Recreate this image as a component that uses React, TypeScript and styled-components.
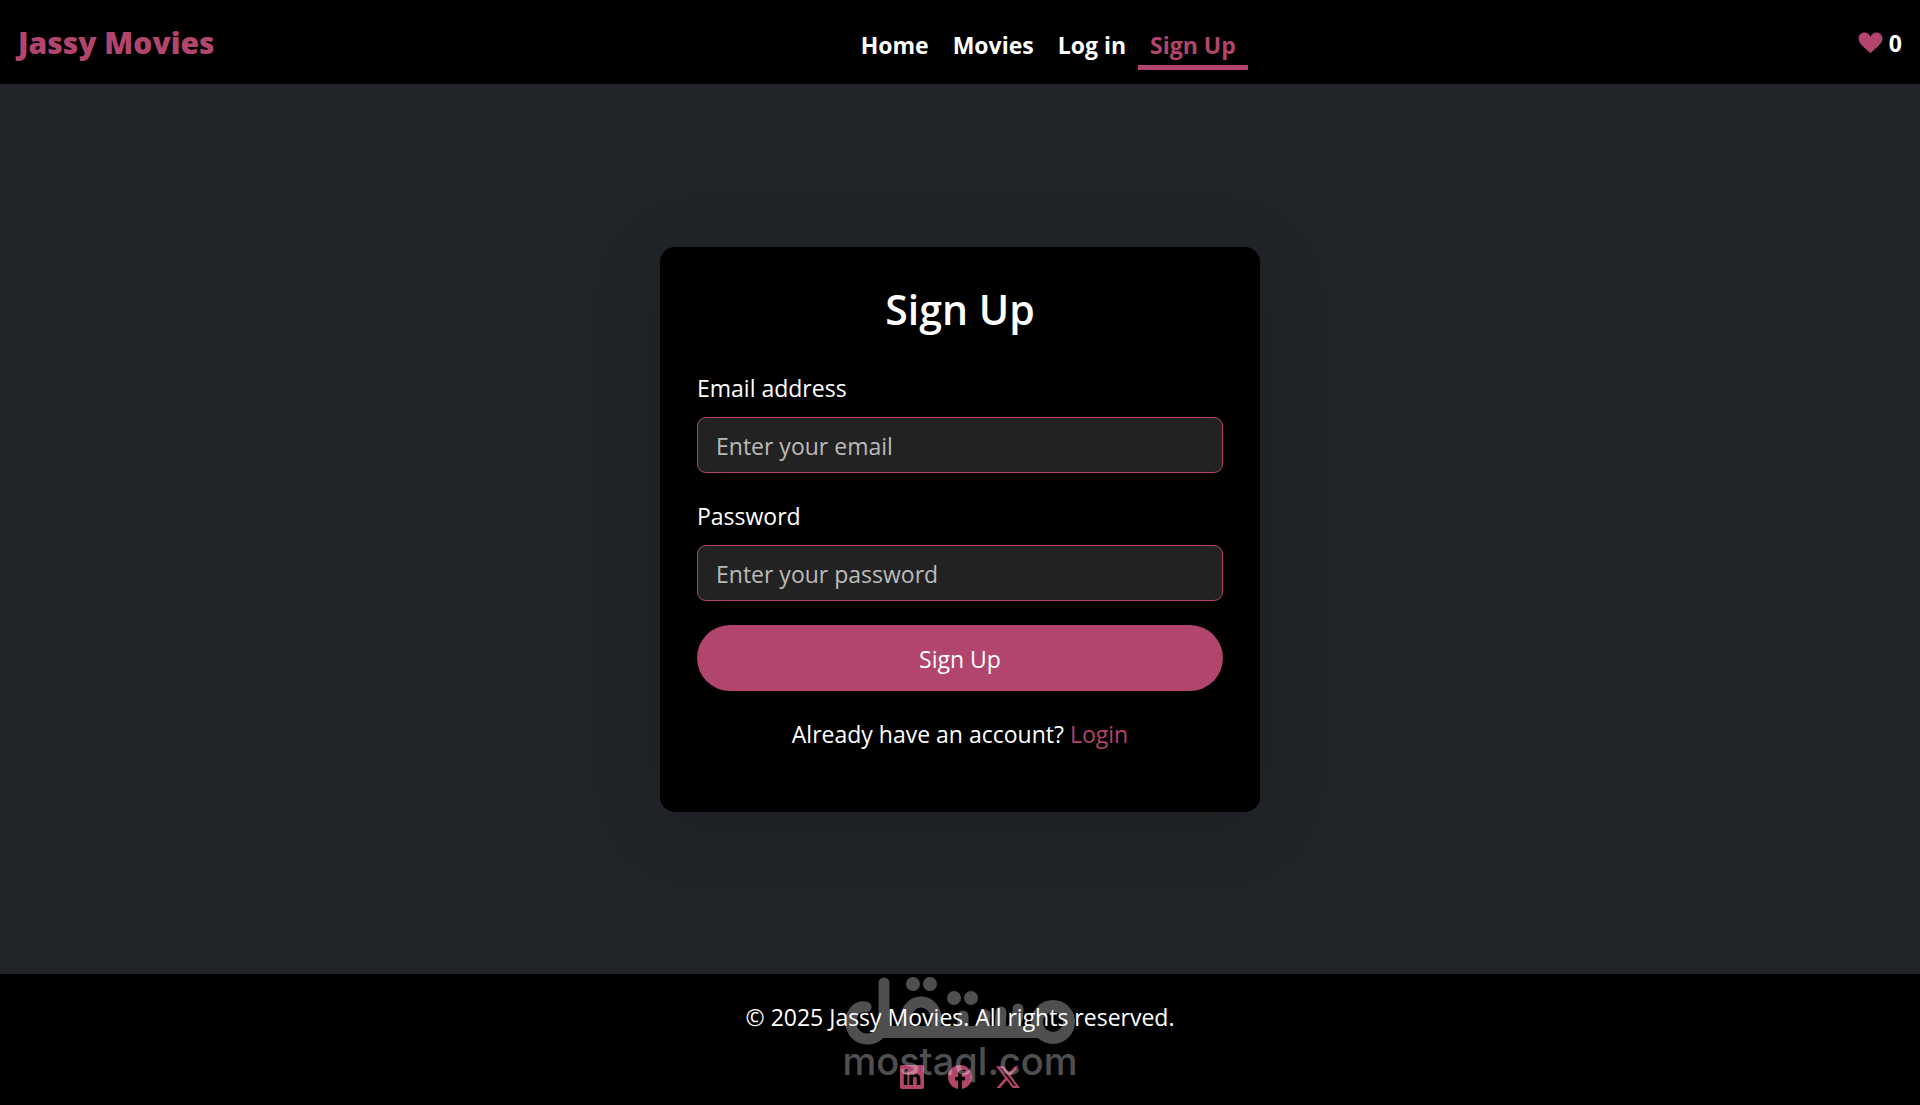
import React from "react";
import styled, { createGlobalStyle } from "styled-components";
import { BsLinkedin, BsFacebook, BsTwitterX } from "react-icons/bs";

const ACCENT = "#b1456d";

const GlobalStyle = createGlobalStyle`
  *, *::before, *::after { box-sizing: border-box; }
  body {
    margin: 0;
    background: #212529;
    color: #fff;
    font-family: "Open Sans", "Noto Sans", sans-serif;
    font-size: 23px;
    line-height: 36px;
  }
  a { color: inherit; text-decoration: none; }
`;

const Page = styled.div`
  display: flex;
  flex-direction: column;
  min-height: 100vh;
`;

const Header = styled.header`
  display: flex;
  align-items: center;
  justify-content: space-between;
  height: 84px;
  padding: 2px 18px 0;
  background: #000;
`;

const Brand = styled.a`
  margin-right: 24px;
  color: ${ACCENT};
  font-size: 30px;
  font-weight: 800;
`;

const Nav = styled.nav`
  display: flex;
`;

const NavLink = styled.a<{ $active?: boolean }>`
  padding: 10px 12px 2px;
  border-bottom: 5px solid ${(p) => (p.$active ? ACCENT : "transparent")};
  color: ${(p) => (p.$active ? ACCENT : "#fff")};
  font-weight: 700;
`;

const Favourites = styled.a`
  display: flex;
  align-items: center;
  gap: 6px;
  font-weight: 700;

  svg { color: ${ACCENT}; }
`;

const Main = styled.main`
  flex: 1;
  display: flex;
  align-items: center;
  justify-content: center;
`;

const Card = styled.section`
  width: 100%;
  max-width: 600px;
  padding: 37px 37px 60px;
  border-radius: 15px;
  background: #000;
  box-shadow: 0 12px 72px rgba(0, 0, 0, 0.18);
`;

const Title = styled.h1`
  margin: 0 0 35px;
  font-size: 41px;
  font-weight: 600;
  line-height: 50px;
  text-align: center;
`;

const Field = styled.div`
  display: flex;
  flex-direction: column;
  gap: 10px;
  margin-bottom: 24px;

  label { line-height: 38px; }
`;

const Input = styled.input`
  width: 100%;
  height: 56px;
  padding: 2px 18px 0;
  border: 1px solid ${ACCENT};
  border-radius: 9px;
  background: #222;
  color: #fff;
  font: inherit;

  &::placeholder { color: #bbb; opacity: 1; }
`;

const Submit = styled.button`
  display: block;
  width: 100%;
  height: 66px;
  padding: 2px 18px 0;
  border: 0;
  border-radius: 33px;
  background: ${ACCENT};
  color: #fff;
  font: inherit;
  cursor: pointer;
`;

const Prompt = styled.p`
  margin: 25px 0 0;
  text-align: center;

  a { color: ${ACCENT}; }
`;

const Footer = styled.footer`
  position: relative;
  display: flex;
  flex-direction: column;
  align-items: center;
  gap: 30px;
  padding: 25px 18px 16px;
  background: #000;

  p { margin: 0; }
`;

const Socials = styled.div`
  display: flex;
  gap: 24px;
  color: ${ACCENT};

  a, svg { display: block; }
`;

const Watermark = styled.svg`
  position: absolute;
  top: 0;
  left: 50%;
  transform: translateX(-50%);
  opacity: 0.31;
  pointer-events: none;
`;

const Heart = () => (
  <svg width="25" height="22" viewBox="0 0 25 22" fill="currentColor" aria-hidden="true">
    <path d="M12.5 21.5 C10 17.5 0.5 13 0.5 6.5 C0.5 3 3.2 0.5 6.5 0.5 C9.3 0.5 11.5 2.2 12.5 4.8 C13.5 2.2 15.7 0.5 18.5 0.5 C21.8 0.5 24.5 3 24.5 6.5 C24.5 13 15 17.5 12.5 21.5 Z" />
  </svg>
);

const MostaqlMark = () => (
  <Watermark width="240" height="131" viewBox="0 0 240 131" aria-hidden="true">
    <g fill="none" stroke="#fff" strokeWidth="11" strokeLinecap="round" strokeLinejoin="round">
      <path d="M26 33 C17 31 11 39 11 48 C11 58 18 65 27 65 C37 65 44 58 44 48 V9" />
      <path d="M38 58 H204" strokeWidth="12" strokeLinecap="butt" />
      <path d="M66 58 V44 A15 16 0 0 1 96 44 V58" />
      <path d="M123 57 V42 M143 57 L145 41 M160 57 L161 38 M178 35 C178 46 176 54 169 58" />
      <circle cx="213" cy="48" r="16" strokeWidth="12" />
    </g>
    <g fill="#fff">
      <circle cx="73" cy="10" r="7" />
      <circle cx="90" cy="10" r="7" />
      <circle cx="114" cy="24" r="7" />
      <circle cx="131" cy="24" r="7" />
      <text x="120" y="101" textAnchor="middle" fontFamily="Inter, sans-serif" fontSize="38" fontWeight="500">
        mostaql.com
      </text>
    </g>
  </Watermark>
);

const links = [
  { label: "Home" },
  { label: "Movies" },
  { label: "Log in" },
  { label: "Sign Up", active: true },
];

export default function App() {
  return (
    <>
      <GlobalStyle />
      <Page>
        <Header>
          <Brand href="#">Jassy Movies</Brand>
          <Nav>
            {links.map((l) => (
              <NavLink key={l.label} href="#" $active={l.active}>
                {l.label}
              </NavLink>
            ))}
          </Nav>
          <Favourites href="#">
            <Heart />
            <span>0</span>
          </Favourites>
        </Header>
        <Main>
          <Card>
            <Title>Sign Up</Title>
            <form onSubmit={(e) => e.preventDefault()}>
              <Field>
                <label htmlFor="email">Email address</label>
                <Input id="email" type="email" placeholder="Enter your email" />
              </Field>
              <Field>
                <label htmlFor="password">Password</label>
                <Input id="password" type="password" placeholder="Enter your password" />
              </Field>
              <Submit type="submit">Sign Up</Submit>
            </form>
            <Prompt>
              Already have an account? <a href="#">Login</a>
            </Prompt>
          </Card>
        </Main>
        <Footer>
          <p>© 2025 Jassy Movies. All rights reserved.</p>
          <Socials>
            <a href="#" aria-label="LinkedIn"><BsLinkedin size={24} /></a>
            <a href="#" aria-label="Facebook"><BsFacebook size={24} /></a>
            <a href="#" aria-label="X"><BsTwitterX size={24} /></a>
          </Socials>
          <MostaqlMark />
        </Footer>
      </Page>
    </>
  );
}
